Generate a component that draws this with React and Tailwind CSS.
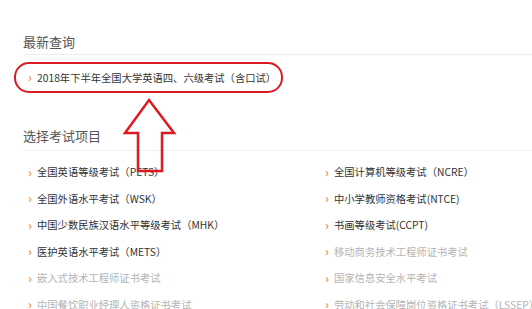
import React from 'react';

const latest = ['2018年下半年全国大学英语四、六级考试（含口试）'];

const exams = [
  { name: '全国英语等级考试（PETS）', on: true },
  { name: '全国计算机等级考试（NCRE）', on: true },
  { name: '全国外语水平考试（WSK）', on: true },
  { name: '中小学教师资格考试(NTCE)', on: true },
  { name: '中国少数民族汉语水平等级考试（MHK）', on: true },
  { name: '书画等级考试(CCPT)', on: true },
  { name: '医护英语水平考试（METS）', on: true },
  { name: '移动商务技术工程师证书考试', on: false },
  { name: '嵌入式技术工程师证书考试', on: false },
  { name: '国家信息安全水平考试', on: false },
  { name: '中国餐饮职业经理人资格证书考试', on: false },
  { name: '劳动和社会保障岗位资格证书考试（LSSEP）', on: false },
];

const Item = ({ name, on = true }) => (
  <li className="flex items-center h-[26.5px] pl-[5px] whitespace-nowrap">
    <span className="text-[#e09a48] text-[12px] font-bold leading-none w-[9px] shrink-0">›</span>
    <span className={`text-[10.3px] ${on ? 'text-[#333]' : 'text-[#b4b4b4]'}`}>{name}</span>
  </li>
);

export default function App() {
  return (
    <div className="relative w-[532px] h-[309px] overflow-hidden bg-white font-['Microsoft_YaHei','Noto_Sans_CJK_SC',sans-serif]">
      <div className="pl-[23px] pt-[32px]">
        {/* 最新查询 */}
        <h3 className="text-[13px] leading-[20px] text-[#555] pb-[2px] border-b border-[#ececec]">最新查询</h3>
        <ul className="mt-[9px]">
          {latest.map((n) => (
            <Item key={n} name={n} />
          ))}
        </ul>

        {/* 选择考试项目 */}
        <h3 className="mt-[35px] text-[13px] leading-[20px] text-[#555] pb-[4px] border-b border-[#f0f0f0]">选择考试项目</h3>
        <ul className="mt-[8px] grid grid-cols-[297px_1fr]">
          {exams.map((e) => (
            <Item key={e.name} name={e.name} on={e.on} />
          ))}
        </ul>
      </div>

      {/* red annotation: outline + arrow */}
      <div className="absolute left-[14px] top-[62px] w-[269px] h-[31px] border-2 border-[#dc1a22] rounded-[15px]" />
      <svg className="absolute left-0 top-0" width="532" height="309" viewBox="0 0 532 309">
        <polygon
          points="149,100 174,133 162,133 162,171 138,171 138,133 125,133"
          fill="none"
          stroke="#dc1a22"
          strokeWidth="2.5"
          strokeLinejoin="miter"
        />
      </svg>
    </div>
  );
}
